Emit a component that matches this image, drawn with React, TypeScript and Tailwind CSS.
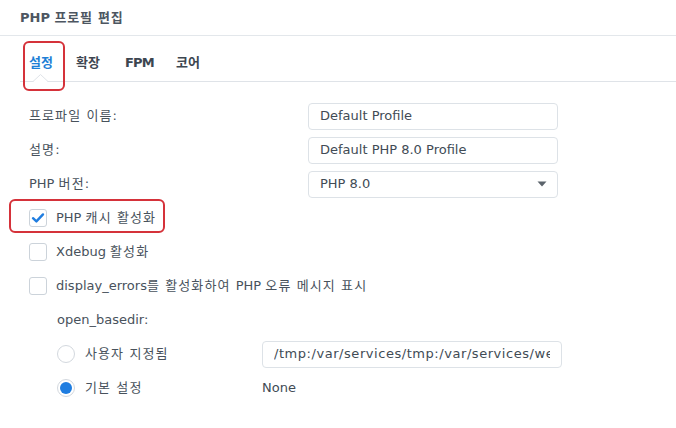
import React from 'react';

const font = { fontFamily: '"DejaVu Sans", "Noto Sans CJK KR", sans-serif' };

// hangul in the reference sits a little wider than Noto CJK
const Ko = ({ children }: { children: React.ReactNode }) => (
  <span className="tracking-[1.1px]">{children}</span>
);

const Checkbox = ({ checked }: { checked?: boolean }) => (
  <span className="w-[18px] h-[18px] rounded-[3px] border border-[#ccd3da] bg-white flex items-center justify-center shrink-0">
    {checked && (
      <svg width="14" height="14" viewBox="0 0 14 14">
        <path d="M2 7.2 L5.4 10.4 L12 3.4" fill="none" stroke="#1f7de0" strokeWidth="2.4" strokeLinecap="round" strokeLinejoin="round" />
      </svg>
    )}
  </span>
);

const Radio = ({ checked }: { checked?: boolean }) => (
  <span className="w-[18px] h-[18px] rounded-full border border-[#d3d8de] bg-white flex items-center justify-center shrink-0">
    {checked && <span className="w-[12px] h-[12px] rounded-full bg-[#1f7de0]" />}
  </span>
);

const TextBox = ({ value, className = '', textClass = '' }: { value: string; className?: string; textClass?: string }) => (
  <div className={`h-[27px] rounded-[4px] border border-[#dde2e7] bg-white px-[11px] flex items-center text-[13px] text-[#414b55] ${className}`}>
    <div className={`flex-1 overflow-hidden whitespace-nowrap ${textClass}`}>{value}</div>
  </div>
);

const Row = ({ label, children }: { label: React.ReactNode; children: React.ReactNode }) => (
  <div className="h-[34px] flex items-center">
    <div className="w-[279px] text-[13px] text-[#48525c]">{label}</div>
    {children}
  </div>
);

export default function App() {
  return (
    <div className="relative w-[676px] h-[428px] bg-white overflow-hidden" style={font}>
      <div className="h-[36px] border-b border-[#e3e7eb] pl-[20px] flex items-center">
        <span className="text-[13px] font-bold text-[#4d5661]">
          PHP <span className="tracking-[0.8px]">프로필 편집</span>
        </span>
      </div>

      <div className="ml-[20px] h-[46px] border-b border-[#dfe3e8] relative flex items-center pl-[9px] pt-[8px] text-[13px] font-bold text-[#3d4650]">
        <span className="w-[47px] text-[#1d7fd6]">설정</span>
        <span className="w-[49px]">확장</span>
        <span className="w-[51px] tracking-[-0.8px]">FPM</span>
        <span>코어</span>
        <svg className="absolute left-[12px] bottom-[-1px]" width="18" height="9" viewBox="0 0 18 9">
          <path d="M1 9 L8.5 1.5 L16 9 Z" fill="#fff" />
          <path d="M1 8.5 L8.5 1.5 L16 8.5" fill="none" stroke="#dfe3e8" strokeWidth="1" />
        </svg>
      </div>

      <div className="absolute left-[23px] top-[41px] w-[42px] h-[50px] border-2 border-[#d5323a] rounded-[6px]" />

      <div className="pt-[17px] pl-[29px]">
        <Row label={<><Ko>프로파일 이름</Ko>:</>}>
          <TextBox value="Default Profile" className="w-[250px]" />
        </Row>
        <Row label={<><Ko>설명</Ko>:</>}>
          <TextBox value="Default PHP 8.0 Profile" className="w-[250px]" />
        </Row>
        <Row label={<>PHP <Ko>버전</Ko>:</>}>
          <div className="w-[250px] h-[27px] rounded-[4px] border border-[#dde2e7] bg-white pl-[11px] pr-[10px] flex items-center justify-between text-[13px] text-[#414b55]">
            <span>PHP 8.0</span>
            <svg width="10" height="6" viewBox="0 0 10 6">
              <path d="M0.5 0.5 L9.5 0.5 L5 5.5 Z" fill="#5b636b" />
            </svg>
          </div>
        </Row>

        <div className="h-[34px] flex items-center gap-[9px] text-[13px] text-[#48525c]">
          <Checkbox checked />
          <span>PHP <Ko>캐시 활성화</Ko></span>
        </div>
        <div className="h-[34px] flex items-center gap-[9px] text-[13px] text-[#48525c]">
          <Checkbox />
          <span>Xdebug <Ko>활성화</Ko></span>
        </div>
        <div className="h-[34px] flex items-center gap-[9px] text-[13px] text-[#48525c]">
          <Checkbox />
          <span>display_errors<Ko>를 활성화하여 </Ko>PHP <Ko>오류 메시지 표시</Ko></span>
        </div>

        <div className="pl-[28px]">
          <div className="h-[34px] flex items-center text-[13px] text-[#48525c]">open_basedir:</div>
          <div className="h-[34px] flex items-center text-[13px] text-[#48525c]">
            <div className="w-[205px] flex items-center gap-[10px]">
              <Radio />
              <Ko>사용자 지정됨</Ko>
            </div>
            <TextBox
              value="/tmp:/var/services/tmp:/var/services/web"
              className="w-[300px]"
              textClass="tracking-[0.55px]"
            />
          </div>
          <div className="h-[34px] flex items-center text-[13px] text-[#48525c]">
            <div className="w-[205px] flex items-center gap-[10px]">
              <Radio checked />
              <Ko>기본 설정</Ko>
            </div>
            <span className="text-[#414b55]">None</span>
          </div>
        </div>
      </div>

      <div className="absolute left-[9px] top-[199px] w-[156px] h-[34px] border-2 border-[#d5323a] rounded-[6px]" />
    </div>
  );
}
